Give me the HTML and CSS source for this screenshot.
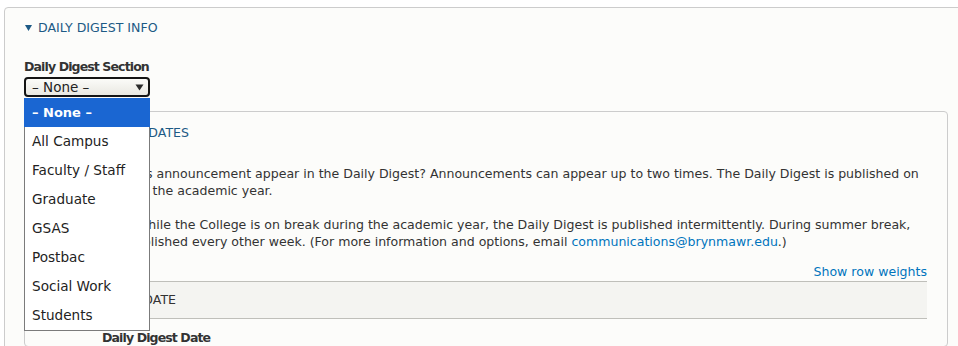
FILE: index.html
```html
<!DOCTYPE html>
<html>
<head>
<meta charset="utf-8">
<title>Daily Digest Info</title>
<link rel="stylesheet" href="styles.css">
</head>
<body>
<div class="outer">
  <div class="legend">
    <svg class="tri" width="7" height="6" viewBox="0 0 7 6"><path d="M0 0H7L3.5 6Z"/></svg>
    <span>Daily Digest Info</span>
  </div>
  <div class="field">
    <div class="label">Daily Digest Section</div>
    <div class="select-wrap">
      <div class="select">
        <span>– None –</span>
        <svg class="arrow" width="9" height="7" viewBox="0 0 9 7"><path d="M0.5 0.5H8.5L4.5 6.5Z"/></svg>
      </div>
      <ul class="menu">
        <li class="opt active">– None –</li>
        <li class="opt">All Campus</li>
        <li class="opt">Faculty / Staff</li>
        <li class="opt">Graduate</li>
        <li class="opt">GSAS</li>
        <li class="opt">Postbac</li>
        <li class="opt">Social Work</li>
        <li class="opt">Students</li>
      </ul>
    </div>
  </div>
  <div class="inner">
    <div class="legend">
      <svg class="tri" width="7" height="6" viewBox="0 0 7 6"><path d="M0 0H7L3.5 6Z"/></svg>
      <span>Daily Digest Dates</span>
    </div>
    <div class="desc">
      <p>When should this announcement appear in the Daily Digest? Announcements can appear up to two times. The Daily Digest is published on weekdays within the academic year.</p>
      <p><strong>Please note:</strong> While the College is on break during the academic year, the Daily Digest is published intermittently. During summer break, the Digest is published every other week. (For more information and options, email <a href="#">communications@brynmawr.edu</a>.)</p>
    </div>
    <div class="weights"><a href="#">Show row weights</a></div>
    <table class="dates">
      <thead>
        <tr><th>Daily Digest Date</th></tr>
      </thead>
      <tbody>
        <tr><td><div class="row-label">Daily Digest Date</div></td></tr>
      </tbody>
    </table>
  </div>
</div>
</body>
</html>
```

FILE: styles.css
```css
html, body {
  margin: 0;
  padding: 0;
  background: #ffffff;
  overflow: hidden;
}

body {
  font-family: "DejaVu Sans", Verdana, sans-serif;
  font-size: 12.55px;
  line-height: 17px;
  color: #333333;
  height: 346px;
}

.outer {
  margin: 7px -30px 0 4px;
  border: 1px solid #cccccc;
  border-radius: 4px;
  background: #fcfcfa;
  padding: 11px 0 40px 19px;
}

.legend {
  display: flex;
  align-items: center;
  gap: 6px;
  text-transform: uppercase;
  color: #1d5a85;
  height: 17px;
}

.legend .tri {
  fill: #1d5a85;
  display: block;
  margin-left: 1px;
}

.field {
  margin-top: 22px;
}

.label {
  font-weight: bold;
  letter-spacing: -0.9px;
  color: #333333;
}

.select-wrap {
  position: relative;
  margin-top: 2px;
  width: 126px;
}

.select {
  box-sizing: border-box;
  height: 20px;
  width: 126px;
  border: 2px solid #141414;
  border-radius: 4px;
  background: linear-gradient(to bottom, #fbfbf8, #e9e8e2);
  display: flex;
  align-items: center;
  justify-content: space-between;
  padding: 0 4px 0 6px;
  font-size: 13.5px;
  line-height: 16px;
  color: #222222;
}

.select .arrow {
  fill: #2a2a2a;
  display: block;
}

.menu {
  position: absolute;
  left: 0;
  top: 21px;
  width: 126px;
  box-sizing: border-box;
  margin: 0;
  padding: 0;
  list-style: none;
  background: #ffffff;
  border: 1px solid #7b7b7b;
  border-top: none;
  z-index: 10;
}

.opt {
  height: 29px;
  line-height: 29px;
  padding-left: 7px;
  font-size: 13.6px;
  color: #222222;
  white-space: nowrap;
}

.opt.active {
  background: #1a66d2;
  color: #ffffff;
  font-weight: bold;
  font-size: 13px;
  margin: 0 -1px;
  padding-left: 8px;
}

.inner {
  margin-top: 14px;
  width: 924px;
  box-sizing: border-box;
  border: 1px solid #cccccc;
  border-radius: 4px;
  background: #fcfcfa;
  padding: 12px 20px 0 19px;
}

.inner .legend .tri {
  margin-left: 2px;
}

.desc {
  margin-top: 24px;
}

.desc p {
  margin: 0 0 17px 0;
}

.desc p:last-child {
  margin-bottom: 0;
}

a {
  color: #0074bd;
  text-decoration: none;
}

.weights {
  margin-top: 13px;
  margin-bottom: 1px;
  text-align: right;
}

.dates {
  width: 100%;
  border-collapse: collapse;
}

.dates th {
  text-align: left;
  font-weight: normal;
  text-transform: uppercase;
  background: #f4f4f1;
  border-top: 1px solid #bfbfba;
  border-bottom: 1px solid #bfbfba;
  padding: 9px 12px 10px 10px;
  color: #333333;
}

.dates td {
  padding: 10px 0 0 58px;
}

.row-label {
  font-weight: bold;
  letter-spacing: -0.9px;
}
```
